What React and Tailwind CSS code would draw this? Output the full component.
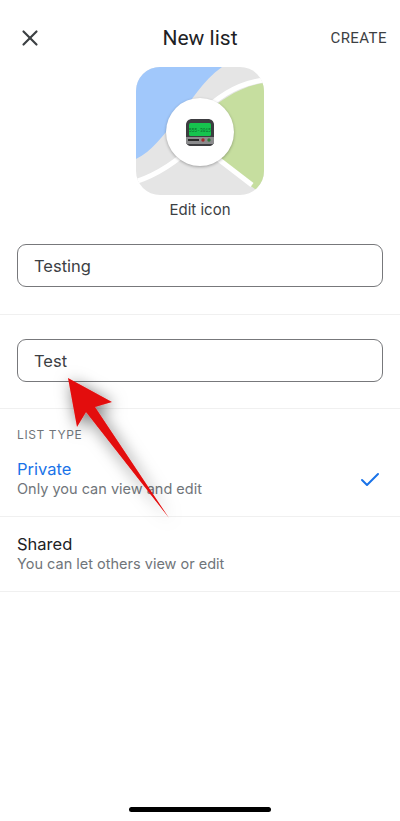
import React from 'react';
import { X, Check } from 'lucide-react';

const MapIcon = () => (
  <svg viewBox="0 0 128 128" className="w-[128px] h-[128px]">
    <defs>
      <clipPath id="tile"><rect width="128" height="128" rx="24" /></clipPath>
    </defs>
    <g clipPath="url(#tile)">
      <rect width="128" height="128" fill="#e5e5e5" />
      <path d="M0 0H86C66 14 56 34 42 50C26 70 16 84 0 92Z" fill="#a1c8fb" />
      <path d="M128 16C106 19 84 32 64 52L66 80C84 94 104 112 122 124L128 112Z" fill="#c6de9f" />
      <path d="M-4 116C22 108 44 92 60 76" stroke="#fff" strokeWidth="5" fill="none" />
      <path d="M128 13C104 16 82 28 62 50" stroke="#fff" strokeWidth="5" fill="none" />
      <path d="M64 78L116 118" stroke="#fff" strokeWidth="5" fill="none" />
    </g>
  </svg>
);

const Pager = () => (
  <svg viewBox="0 0 30 27" className="w-[30px] h-[27px]">
    <path d="M1 6C1 2 4 0 7 0H23C26 0 29 2 29 6V22C29 25 27 27 24 27H6C3 27 1 25 1 22Z" fill="#3d3d40" />
    <rect x="1" y="18" width="28" height="7" fill="#8b8b8d" />
    <rect x="4" y="4" width="22" height="13" rx="1.5" fill="#16c44e" />
    <text x="15" y="12.5" textAnchor="middle" fontSize="4.6" fill="#0a6b2a" fontFamily="Liberation Mono, monospace">555-3015</text>
    <rect x="3" y="20" width="11" height="2" fill="#2a2a2a" />
    <circle cx="18" cy="21" r="1.7" fill="#a02a2a" />
    <circle cx="24" cy="21" r="1.7" fill="#2f7b3a" />
  </svg>
);

const Field = ({ value }) => (
  <div className="mx-[17px] h-[43px] rounded-[9px] border border-[#77787b] flex items-center px-[16px] pt-[2px] text-[16.5px] text-[#3c4043]">
    {value}
  </div>
);

const Divider = ({ className }) => <div className={`border-b border-[#f0f0f0] ${className}`} />;

const TypeRow = ({ title, sub, active, className }) => (
  <div className={`border-b border-[#f0f0f0] pl-[17px] pr-[18px] pb-[18px] flex items-start justify-between ${className}`}>
    <div>
      <p className={`text-[16.5px] leading-[22px] ${active ? 'text-[#1a73e8]' : 'text-[#202124]'}`}>{title}</p>
      <p className="text-[14.5px] leading-[18px] text-[#70757a]">{sub}</p>
    </div>
    {active && <Check className="w-[24px] h-[24px] mt-[10px] text-[#1a73e8]" strokeWidth={2} />}
  </div>
);

export default function App() {
  return (
    <div className="relative w-[400px] h-[821px] bg-white overflow-hidden font-['Inter',sans-serif]">
      {/* Header */}
      <div className="flex items-center justify-between h-[29px] mt-[23px] pl-[17px] pr-[13px] relative">
        <X className="w-[26px] h-[26px] text-[#3c4043]" strokeWidth={2} />
        <h1 className="absolute left-0 right-0 top-0 text-center text-[21px] text-[#202124] font-['Roboto',sans-serif]">New list</h1>
        <span className="pt-[2px] text-[15px] text-[#3c4043] tracking-[0.45px] font-['Roboto',sans-serif]">CREATE</span>
      </div>

      {/* Icon */}
      <div className="flex flex-col items-center mt-[15px]">
        <div className="relative">
          <MapIcon />
          <div className="absolute left-[30px] top-[31px] w-[68px] h-[68px] rounded-full bg-white shadow-[0_1px_3px_rgba(0,0,0,0.3)] flex items-center justify-center">
            <Pager />
          </div>
        </div>
        <p className="mt-[6px] text-[15px] leading-[18px] text-[#3c4043]">Edit icon</p>
      </div>

      {/* Name and description */}
      <div className="mt-[25px]"><Field value="Testing" /></div>
      <Divider className="mt-[27px]" />
      <div className="mt-[24px]"><Field value="Test" /></div>
      <Divider className="mt-[26px]" />

      {/* List type */}
      <p className="mt-[19px] pl-[17px] text-[12px] leading-[14px] tracking-[0.6px] text-[#70757a]">LIST TYPE</p>
      <TypeRow className="mt-[16px]" title="Private" sub="Only you can view and edit" active />
      <TypeRow className="pt-[16px]" title="Shared" sub="You can let others view or edit" />

      {/* Annotation arrow */}
      <svg viewBox="0 0 400 821" className="absolute inset-0 w-[400px] h-[821px] pointer-events-none">
        <defs>
          <filter id="arrowShadow" x="-50%" y="-50%" width="200%" height="200%">
            <feDropShadow dx="2" dy="3" stdDeviation="8" floodColor="#000" floodOpacity="0.55" />
          </filter>
        </defs>
        <path d="M68 378L112 402L95 407L169 518L86 412L77 427Z" fill="#e30909" filter="url(#arrowShadow)" />
      </svg>

      {/* Home indicator */}
      <div className="absolute bottom-[9px] left-[129px] w-[142px] h-[5px] rounded-full bg-black" />
    </div>
  );
}
